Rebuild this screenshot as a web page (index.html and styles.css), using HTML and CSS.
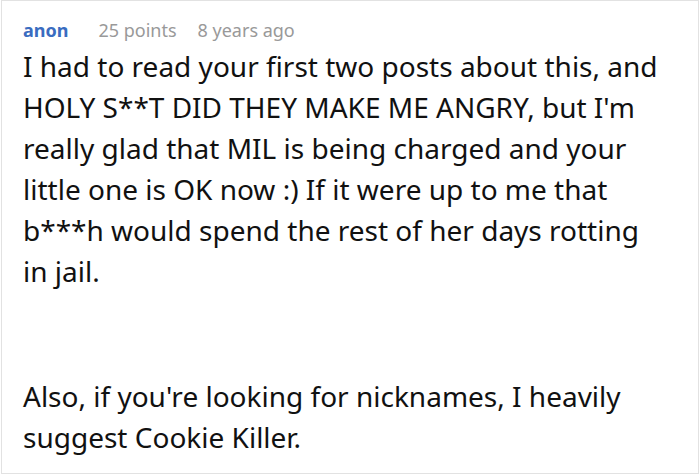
FILE: index.html
```html
<!DOCTYPE html>
<html>
<head>
<meta charset="utf-8">
<link rel="stylesheet" href="styles.css">
</head>
<body>
<div class="comment">
  <div class="meta">
    <span class="author">anon</span>
    <span class="points">25 points</span>
    <span class="time">8 years ago</span>
  </div>
  <p class="text">I had to read your first two posts about this, and HOLY S**T DID THEY MAKE ME ANGRY, but I'm really glad that MIL is being charged and your little one is OK now :) If it were up to me that b***h would spend the rest of her days rotting in jail.</p>
  <p class="text later">Also, if you're looking for nicknames, I heavily suggest Cookie Killer.</p>
</div>
</body>
</html>
```
FILE: styles.css
```css
html, body {
  margin: 0;
  padding: 0;
  background: #fff;
}
.comment {
  box-sizing: border-box;
  width: 698px;
  height: 474px;
  margin-left: 1px;
  border: 1px solid #e2e2e2;
  padding: 15px 40px 0 21px;
  font-family: "Noto Sans", "Open Sans", sans-serif;
  overflow: hidden;
}
.meta {
  display: flex;
  align-items: baseline;
  font-size: 18px;
  line-height: 28px;
  margin-bottom: 2px;
  color: #999;
}
.author {
  color: #3a6cc0;
  font-weight: 700;
  margin-right: 30px;
}
.points {
  margin-right: 21px;
}
.text {
  margin: 0;
  font-size: 28px;
  line-height: 41px;
  color: #111;
}
.later {
  margin-top: 84px;
}
```
